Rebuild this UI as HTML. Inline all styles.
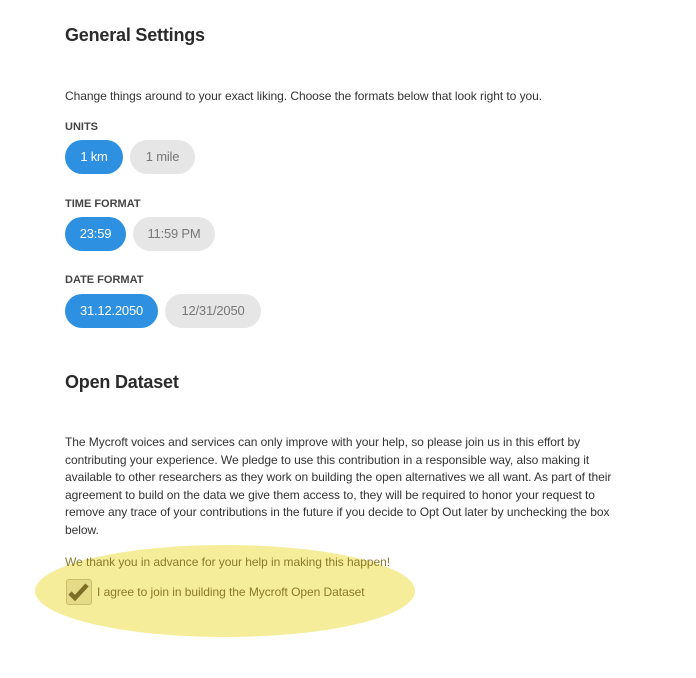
<!DOCTYPE html>
<html><head><meta charset="utf-8"><style>
body{margin:0;width:696px;height:678px;background:#fff;font-family:"Liberation Sans",sans-serif;color:#333;position:relative;overflow:hidden}
.a{position:absolute;white-space:nowrap}
h2{position:absolute;margin:0;font-size:18px;font-weight:bold;color:#2b2b2b;letter-spacing:-0.2px}
.t{font-size:12px;letter-spacing:-0.05px;color:#333}
.lab{font-size:11px;font-weight:bold;color:#444}
.b{position:absolute;height:34px;border-radius:17px;font-size:13px;line-height:34px;text-align:center;letter-spacing:-0.2px}
.on{background:#2e90e0;color:#fff}
.off{background:#e6e6e6;color:#777}
.p{position:absolute;left:65px;top:434px;font-size:12px;letter-spacing:-0.05px;line-height:17.5px;white-space:nowrap;color:#333}
</style></head><body>
<h2 style="left:65px;top:25px">General Settings</h2>
<div class="a t" style="left:65px;top:89px">Change things around to your exact liking. Choose the formats below that look right to you.</div>
<div class="a lab" style="left:65px;top:121px">UNITS</div>
<div class="b on" style="left:65px;top:140px;width:58px">1 km</div>
<div class="b off" style="left:130px;top:140px;width:65px">1 mile</div>
<div class="a lab" style="left:65px;top:198px">TIME FORMAT</div>
<div class="b on" style="left:65px;top:217px;width:61px">23:59</div>
<div class="b off" style="left:133px;top:217px;width:82px">11:59 PM</div>
<div class="a lab" style="left:65px;top:274px">DATE FORMAT</div>
<div class="b on" style="left:65px;top:294px;width:93px">31.12.2050</div>
<div class="b off" style="left:165px;top:294px;width:96px">12/31/2050</div>
<h2 style="left:65px;top:372px">Open Dataset</h2>
<div class="p">The Mycroft voices and services can only improve with your help, so please join us in this effort by<br>contributing your experience. We pledge to use this contribution in a responsible way, also making it<br>available to other researchers as they work on building the open alternatives we all want. As part of their<br>agreement to build on the data we give them access to, they will be required to honor your request to<br>remove any trace of your contributions in the future if you decide to Opt Out later by unchecking the box<br>below.</div>
<div style="position:absolute;left:35px;top:545px;width:380px;height:92px;border-radius:50%;background:#f6ed9b"></div>
<div class="a t" style="left:65px;top:555px;color:#8a7a2a">We thank you in advance for your help in making this happen!</div>
<div style="position:absolute;left:66px;top:579px;width:24px;height:24px;border:1px solid #c9bd6a;border-radius:3px;background:#e5da86"></div>
<svg style="position:absolute;left:68px;top:582px" width="22" height="20" viewBox="0 0 22 20"><path d="M2 11 L7 16 L19 3" fill="none" stroke="#7d6e27" stroke-width="4.5"/></svg>
<div class="a t" style="left:97px;top:585px;color:#8a7a2a">I agree to join in building the Mycroft Open Dataset</div>
</body></html>
